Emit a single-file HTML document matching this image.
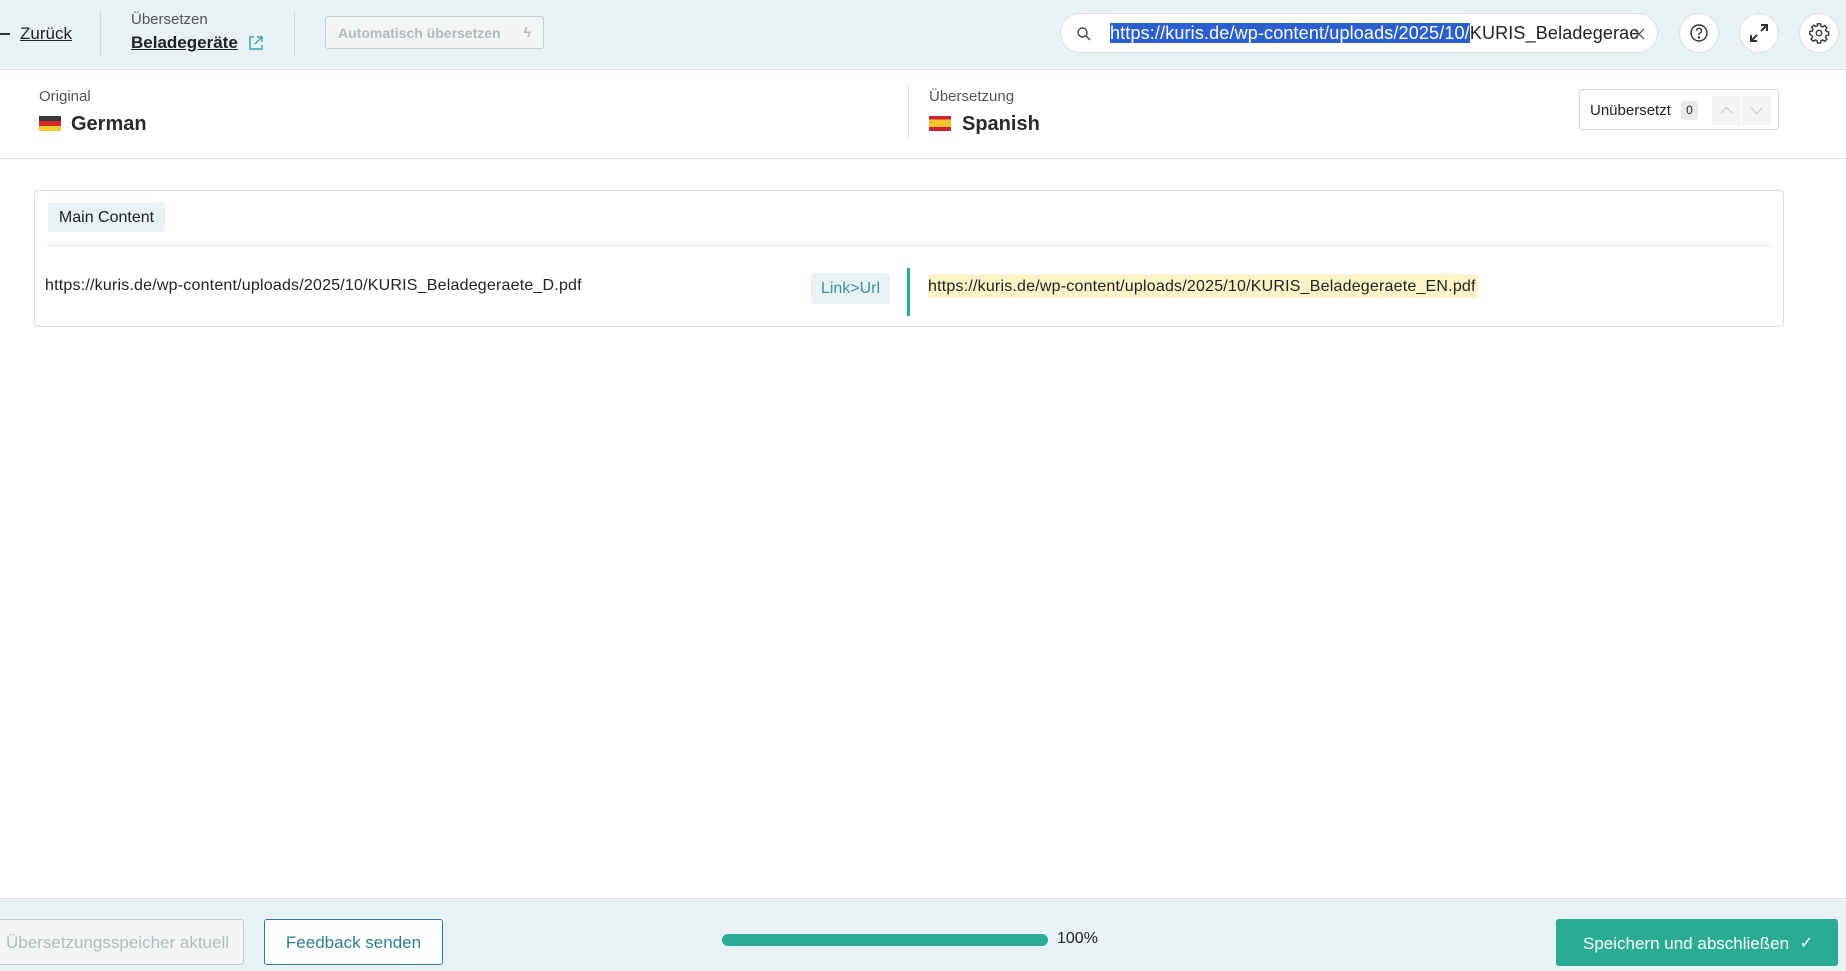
<!DOCTYPE html>
<html><head><meta charset="utf-8"><style>
*{box-sizing:border-box;margin:0;padding:0}
body{width:1846px;height:971px;position:relative;overflow:hidden;background:#fff;font-family:"Liberation Sans",Arial,sans-serif;color:#222}
.a{position:absolute}
.hdr{left:0;top:0;width:1846px;height:70px;background:#e8f2f5;border-bottom:1px solid #d6e2e6}
.ftr{left:0;top:898px;width:1846px;height:73px;background:#e8f2f5;border-top:1px solid #d6e2e6}
.circ{width:40px;height:40px;border-radius:50%;background:#fff;border:1px solid #d8e0e3;display:flex;align-items:center;justify-content:center}
</style></head><body>
<div class="a hdr"></div>
<div class="a" style="left:0;top:33px;width:10px;height:1.5px;background:#333"></div>
<div class="a" style="left:20px;top:24px;font-size:17px;text-decoration:underline;color:#222">Zurück</div>
<div class="a" style="left:100px;top:11px;width:1px;height:46px;background:#cfdadd"></div>
<div class="a" style="left:131px;top:11px;font-size:15px;color:#555">Übersetzen</div>
<div class="a" style="left:131px;top:33px;font-size:17px;font-weight:bold;text-decoration:underline;color:#222">Beladegeräte</div>
<svg class="a" style="left:248px;top:35px" width="16" height="16" viewBox="0 0 16 16" fill="none" stroke="#3aa0b0" stroke-width="1.4"><path d="M6 2H2v12h12v-4M9 2h5v5M14 2L7 9"/></svg>
<div class="a" style="left:294px;top:11px;width:1px;height:46px;background:#cfdadd"></div>
<div class="a" style="left:325px;top:16px;width:219px;height:33px;border:1px solid #c8cfd2;border-radius:3px;background:#f2f4f5;font-size:14px;font-weight:bold;color:#b3b8ba;padding:8px 12px;white-space:nowrap">Automatisch übersetzen<span style="position:absolute;right:12px;top:7px">ϟ</span></div>
<div class="a" style="left:1060px;top:13px;width:598px;height:40px;border:1px solid #d8e0e3;border-radius:20px;background:#fff;overflow:hidden">
<svg class="a" style="left:15px;top:12px" width="16" height="16" viewBox="0 0 16 16" fill="none" stroke="#444" stroke-width="1.4"><circle cx="6.5" cy="6.5" r="4.5"/><path d="M10 10l4 4"/></svg>
<div class="a" style="left:49px;top:9px;font-size:18px;white-space:nowrap;color:#222;letter-spacing:0.15px"><span style="background:#2b5fd0;color:#fff">https://kuris.de/wp-content/uploads/2025/10/</span>KURIS_Beladegeraete_EN.pdf</div>
<div class="a" style="left:578px;top:0;width:20px;height:40px;background:#fff"></div>
<svg class="a" style="left:572px;top:14px" width="12" height="12" viewBox="0 0 12 12" stroke="#555" stroke-width="1.3"><path d="M1 1l10 10M11 1L1 11"/></svg>
</div>
<div class="a circ" style="left:1679px;top:13px"><svg width="20" height="20" viewBox="0 0 20 20" fill="none" stroke="#333" stroke-width="1.4"><circle cx="10" cy="10" r="8"/><path d="M7.5 7.8a2.5 2.5 0 1 1 3.4 2.3c-.6.3-.9.8-.9 1.4v.8"/><circle cx="10" cy="14.5" r=".5" fill="#333"/></svg></div>
<div class="a circ" style="left:1739px;top:13px"><svg width="22" height="22" viewBox="0 0 22 22" fill="none" stroke="#333" stroke-width="2"><path d="M13 3h6v6M19 3l-6 6M9 19H3v-6M3 19l6-6"/></svg></div>
<div class="a circ" style="left:1799px;top:13px"><svg width="22" height="22" viewBox="0 0 24 24" fill="none" stroke="#333" stroke-width="1.5"><circle cx="12" cy="12" r="3"/><path d="M10.3 2h3.4l.5 2.6 1.8.8 2.2-1.5 2.4 2.4-1.5 2.2.8 1.8 2.6.5v3.4l-2.6.5-.8 1.8 1.5 2.2-2.4 2.4-2.2-1.5-1.8.8-.5 2.6h-3.4l-.5-2.6-1.8-.8-2.2 1.5-2.4-2.4 1.5-2.2-.8-1.8L2 13.7v-3.4l2.6-.5.8-1.8-1.5-2.2 2.4-2.4 2.2 1.5 1.8-.8z"/></svg></div>

<div class="a" style="left:39px;top:88px;font-size:15px;color:#555">Original</div>
<div class="a" style="left:39px;top:116px;width:22px;height:15px;background:linear-gradient(#3a3a3a 0 33%,#d9262b 33% 66%,#f6cb2f 66%)"></div>
<div class="a" style="left:71px;top:113px;font-size:20px;font-weight:bold;color:#2a2a2a">German</div>
<div class="a" style="left:908px;top:82px;width:1px;height:57px;background:#e0e5e7"></div>
<div class="a" style="left:929px;top:88px;font-size:15px;color:#555">Übersetzung</div>
<div class="a" style="left:929px;top:116px;width:22px;height:15px;background:linear-gradient(#c9242b 0 25%,#f6c431 25% 75%,#c9242b 75%)"></div>
<div class="a" style="left:962px;top:113px;font-size:20px;font-weight:bold;color:#2a2a2a">Spanish</div>
<div class="a" style="left:1579px;top:89px;width:200px;height:41px;border:1px solid #d5dcdf;border-radius:3px;background:#fff">
<div class="a" style="left:10px;top:12px;font-size:15px;color:#222">Unübersetzt</div>
<div class="a" style="left:101px;top:11px;width:17px;height:19px;background:#e8eaeb;border-radius:3px;font-size:12px;text-align:center;line-height:19px">0</div>
<div class="a" style="left:132px;top:6px;width:29px;height:29px;background:#f2f4f5"><svg width="29" height="29" viewBox="0 0 29 29" fill="none" stroke="#c5c9cb" stroke-width="1.2"><path d="M9 17l5.5-5.5L20 17"/></svg></div>
<div class="a" style="left:162px;top:6px;width:29px;height:29px;background:#f2f4f5"><svg width="29" height="29" viewBox="0 0 29 29" fill="none" stroke="#c5c9cb" stroke-width="1.2"><path d="M9 12l5.5 5.5L20 12"/></svg></div>
</div>
<div class="a" style="left:0;top:158px;width:1846px;height:1px;background:#e4e9eb"></div>

<div class="a" style="left:34px;top:190px;width:1750px;height:137px;border:1px solid #d8dfe2;border-radius:4px"></div>
<div class="a" style="left:48px;top:202px;width:117px;height:30px;background:#e8f2f5;border-radius:3px;font-size:16px;line-height:31px;text-align:center;color:#222">Main Content</div>
<div class="a" style="left:47px;top:245px;width:1724px;height:1px;background:#e0e5e7"></div>
<div class="a" style="left:45px;top:277px;font-size:16px;color:#222;letter-spacing:0.2px">https://kuris.de/wp-content/uploads/2025/10/KURIS_Beladegeraete_D.pdf</div>
<div class="a" style="left:811px;top:273px;width:79px;height:31px;background:#e8f2f5;border-radius:3px;font-size:16px;line-height:32px;text-align:center;color:#3a8fa0">Link&gt;Url</div>
<div class="a" style="left:907px;top:268px;width:3px;height:48px;background:#2aa890"></div>
<div class="a" style="left:928px;top:274px;width:550px;height:24px;background:#fdf3c9"></div>
<div class="a" style="left:928px;top:278px;font-size:16px;color:#222;letter-spacing:0.2px">https://kuris.de/wp-content/uploads/2025/10/KURIS_Beladegeraete_EN.pdf</div>

<div class="a ftr"></div>
<div class="a" style="left:-2px;top:919px;width:246px;height:46px;border:1px solid #c5cccf;border-radius:3px;background:#f2f4f5;font-size:17px;color:#b5babc;line-height:46px;padding-left:7px;white-space:nowrap">Übersetzungsspeicher aktuell</div>
<div class="a" style="left:264px;top:919px;width:179px;height:46px;border:1px solid #2e7d93;border-radius:3px;background:#fff;font-size:17px;color:#2e7d93;line-height:46px;text-align:center">Feedback senden</div>
<div class="a" style="left:722px;top:934px;width:326px;height:12px;border-radius:6px;background:#2aab93"></div>
<div class="a" style="left:1057px;top:930px;font-size:16px;color:#222">100%</div>
<div class="a" style="left:1556px;top:919px;width:282px;height:47px;border-radius:3px;background:#2aab93;color:#fff;font-size:17px;line-height:49px;padding-left:27px;white-space:nowrap">Speichern und abschließen<span style="position:absolute;right:25px;font-size:16px">✓</span></div>
</body></html>
